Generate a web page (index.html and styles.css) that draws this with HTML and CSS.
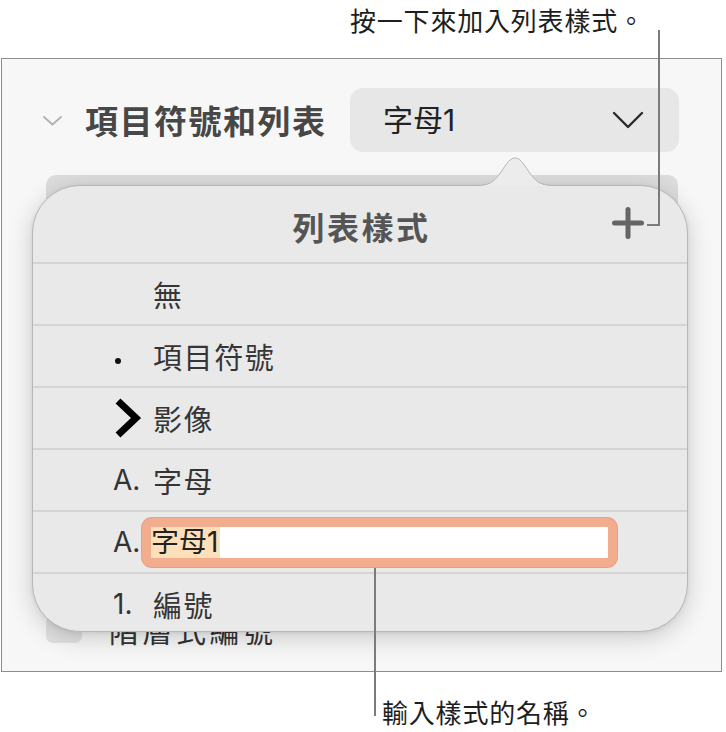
FILE: index.html
```html
<!DOCTYPE html>
<html lang="zh-Hant">
<head>
<meta charset="utf-8">
<title>列表樣式</title>
<link rel="stylesheet" href="styles.css">
</head>
<body>
<div class="page">
  <p class="note note-top">按一下來加入列表樣式。</p>
  <section class="panel">
    <div class="section-head">
      <svg class="disclosure" width="21" height="13" viewBox="0 0 21 13"><polyline points="2,3 10.5,10.5 19,3" fill="none" stroke="#b3b3b3" stroke-width="2" stroke-linecap="round" stroke-linejoin="round"/></svg>
      <h2 class="section-title">項目符號和列表</h2>
      <div class="select">
        <span class="select-value">字母1</span>
        <svg class="select-chevron" width="32" height="19" viewBox="0 0 32 19"><polyline points="2,2 16,16 30,2" fill="none" stroke="#2a2a2a" stroke-width="2.4" stroke-linecap="round" stroke-linejoin="round"/></svg>
      </div>
    </div>
    <div class="hidden-control"></div>
    <div class="hidden-row">
      <span class="checkbox"></span>
      <span class="hidden-label">階層式編號</span>
    </div>
  </section>
  <p class="note note-bottom">輸入樣式的名稱。</p>

  <svg class="popover-arrow" width="80" height="30" viewBox="0 0 80 30"><path d="M0,29.5 C14,29.5 18,27 26,16 C32,7 35,2 40,2 C45,2 48,7 54,16 C62,27 66,29.5 80,29.5 L80,31 L0,31 Z" fill="#ececec"/><path d="M0,29.5 C14,29.5 18,27 26,16 C32,7 35,2 40,2 C45,2 48,7 54,16 C62,27 66,29.5 80,29.5" fill="none" stroke="#b4b4b4" stroke-width="1"/></svg>
  <div class="popover">
    <div class="popover-head">
      <span></span>
      <h3 class="popover-title">列表樣式</h3>
      <svg class="add" width="32" height="32" viewBox="0 0 32 32"><line x1="16" y1="2.5" x2="16" y2="29.5" stroke="#656565" stroke-width="5" stroke-linecap="round"/><line x1="2.5" y1="16" x2="29.5" y2="16" stroke="#656565" stroke-width="5" stroke-linecap="round"/></svg>
    </div>
    <ul class="styles">
      <li class="style-row"><span class="marker"></span><span class="label">無</span></li>
      <li class="style-row"><span class="marker"><span class="dot"></span></span><span class="label">項目符號</span></li>
      <li class="style-row"><span class="marker"><svg width="30" height="42" viewBox="0 0 30 42"><polyline points="5,4 23,21 5,38" fill="none" stroke="#000" stroke-width="7" stroke-linejoin="miter"/></svg></span><span class="label">影像</span></li>
      <li class="style-row"><span class="marker latin">A.</span><span class="label">字母</span></li>
      <li class="style-row"><span class="marker latin marker-narrow">A.</span><span class="name-field"><span class="selection">字母1</span></span></li>
      <li class="style-row"><span class="marker latin">1.</span><span class="label">編號</span></li>
    </ul>
  </div>

  <span class="leader leader-top-v"></span>
  <span class="leader leader-top-h"></span>
  <span class="leader leader-bottom"></span>
</div>
</body>
</html>
```

FILE: styles.css
```css
html, body {
  margin: 0;
  padding: 0;
  background: #ffffff;
}

body {
  font-family: Inter, "Noto Sans CJK TC", "Noto Sans", sans-serif;
  color: #222;
}

.page {
  position: relative;
  width: 726px;
  height: 732px;
  overflow: hidden;
}

.note {
  margin: 0;
  font-family: "Noto Sans CJK TC", sans-serif;
  font-size: 26px;
  line-height: 40px;
  letter-spacing: 0.8px;
  color: #1e1e1e;
}

.note-top {
  height: 58px;
  padding-left: 350px;
  box-sizing: border-box;
}

.note-bottom {
  margin-top: 20px;
  padding-left: 382px;
}

.panel {
  margin-left: 1px;
  width: 721px;
  height: 614px;
  box-sizing: border-box;
  border: 1px solid #8d8d8d;
  background: #f7f7f7;
  padding-top: 29px;
}

.section-head {
  display: flex;
  align-items: center;
  height: 64px;
  padding-left: 40px;
}

.disclosure {
  flex: none;
  margin-right: 22px;
}

.section-title {
  margin: 0;
  font-family: "Noto Sans CJK TC", sans-serif;
  font-size: 33px;
  font-weight: 700;
  letter-spacing: 1.5px;
  color: #474747;
  line-height: 40px;
}

.select {
  margin-left: auto;
  margin-right: 42px;
  width: 329px;
  height: 64px;
  box-sizing: border-box;
  border-radius: 13px;
  background: #e7e7e7;
  display: flex;
  align-items: center;
  justify-content: space-between;
  padding: 0 35px 0 33px;
}

.select-value {
  font-size: 30px;
  line-height: 40px;
  color: #222;
}

.hidden-control {
  margin: 23px 43px 0 44px;
  height: 60px;
  border-radius: 10px;
  background: #dcdcdc;
}

.hidden-row {
  display: flex;
  align-items: center;
  margin-top: 380px;
  padding-left: 44px;
  gap: 33px;
}

.checkbox {
  width: 36px;
  height: 28px;
  border-radius: 7px;
  background: #e1e1e1;
}

.hidden-label {
  font-family: "Noto Sans CJK TC", sans-serif;
  font-size: 30px;
  line-height: 28px;
  letter-spacing: 3.5px;
  color: #333;
  margin-left: -6px;
}

.popover-arrow {
  position: absolute;
  left: 475px;
  top: 156px;
  z-index: 3;
}

.popover {
  position: absolute;
  left: 32px;
  top: 185px;
  width: 656px;
  height: 447px;
  box-sizing: border-box;
  border: 1px solid #b7b7b7;
  border-radius: 48px;
  background: #e9e9e9;
  box-shadow: 0 6px 24px rgba(0, 0, 0, 0.18), 0 1px 4px rgba(0, 0, 0, 0.08);
  z-index: 2;
}

.popover-head {
  height: 76px;
  display: grid;
  grid-template-columns: 1fr auto 1fr;
  align-items: center;
  padding-top: 3px;
  box-sizing: border-box;
}

.popover-title {
  margin: 0;
  font-family: "Noto Sans CJK TC", sans-serif;
  font-size: 32px;
  font-weight: 700;
  letter-spacing: 2.5px;
  color: #555;
  line-height: 40px;
  padding-left: 3px;
}

.add {
  justify-self: end;
  margin-right: 43px;
  margin-top: -5px;
}

.styles {
  margin: 0;
  padding: 0;
  list-style: none;
}

.style-row {
  height: 62px;
  box-sizing: border-box;
  border-top: 2px solid #d5d5d5;
  display: flex;
  align-items: center;
  padding-left: 80px;
}

.marker {
  flex: none;
  width: 40px;
  display: flex;
  align-items: center;
}

.marker-narrow {
  width: 29px;
}

.latin {
  font-family: Inter, sans-serif;
  font-size: 28px;
  color: #333;
  line-height: 40px;
}

.dot {
  width: 6px;
  height: 6px;
  border-radius: 50%;
  background: #111;
  margin: 10px 0 0 2px;
}

.label {
  font-family: "Noto Sans CJK TC", sans-serif;
  font-size: 29px;
  letter-spacing: 1.6px;
  line-height: 40px;
  color: #353535;
}

.name-field {
  width: 475px;
  height: 49px;
  box-sizing: border-box;
  border: 9px solid #f1ad8d;
  border-radius: 10px;
  background: #ffffff;
  box-shadow: 0 0 0 1px #e7a283;
  display: flex;
  align-items: stretch;
}

.selection {
  background: #fde0ba;
  font-size: 28px;
  line-height: 31px;
  color: #222;
  padding-right: 2px;
}

.leader {
  position: absolute;
  background: #7b7b7b;
  z-index: 4;
}

.leader-top-v {
  left: 658px;
  top: 30px;
  width: 2px;
  height: 196px;
}

.leader-top-h {
  left: 647px;
  top: 224px;
  width: 12px;
  height: 2px;
}

.leader-bottom {
  left: 374px;
  top: 568px;
  width: 2px;
  height: 148px;
}
```
